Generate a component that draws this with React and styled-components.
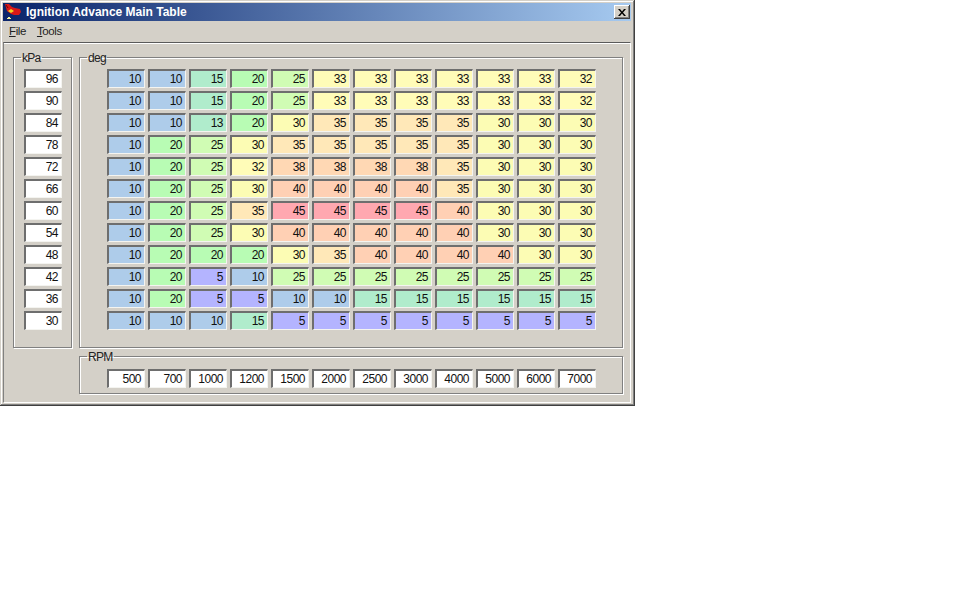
import React from "react";
import styled, { createGlobalStyle } from "styled-components";

const GlobalStyle = createGlobalStyle`
    html, body {
        margin: 0;
        padding: 0;
        background-color: #fff;
    }
    body {
        font-family: "Liberation Sans", Arial, sans-serif;
        font-size: 12px;
        color: #000;
    }
`;

const Window = styled.div`
    box-sizing: border-box;
    display: flex;
    flex-direction: column;
    width: 635px;
    height: 406px;
    padding: 3px 4px 3px 3px;
    background-color: #d4d0c8;
    box-shadow: inset -1px -1px 0 #404040, inset 1px 1px 0 #d4d0c8,
        inset -2px -2px 0 #808080, inset 2px 2px 0 #fff;
`;

const TitleBar = styled.div`
    display: flex;
    align-items: center;
    flex: 0 0 18px;
    padding: 0 1px 0 2px;
    background: linear-gradient(to right, #0a246a, #a6caf0);
`;

const TitleText = styled.span`
    flex: 1;
    margin-left: 5px;
    color: #fff;
    font-family: "Liberation Sans", Arial, sans-serif;
    font-size: 12px;
    font-weight: 700;
    line-height: 18px;
    white-space: nowrap;
`;

const CloseButton = styled.div`
    display: flex;
    align-items: center;
    justify-content: center;
    width: 16px;
    height: 14px;
    background-color: #d4d0c8;
    box-shadow: inset -1px -1px 0 #404040, inset 1px 1px 0 #fff, inset -2px -2px 0 #808080;
`;

const MenuBar = styled.div`
    display: flex;
    flex: 0 0 19px;
    align-items: center;
    gap: 11px;
    padding: 0 0 1px 6px;
`;

const MenuItem = styled.span`
    color: #222;
    font-size: 11.5px;
    letter-spacing: -0.4px;
    line-height: 18px;

    u {
        text-decoration: underline;
        text-underline-offset: 1px;
    }
`;

const ClientArea = styled.div`
    box-sizing: border-box;
    display: flex;
    flex: 1;
    gap: 7px;
    padding: 7px 7px 0 9px;
    margin-top: 1px;
    border-top: 1px solid #5a5a5a;
    border-left: 1px solid #808080;
    border-right: 1px solid #fff;
    border-bottom: 1px solid #fff;
    box-shadow: inset 0 1px 0 #fff;
`;

const Group = styled.fieldset`
    box-sizing: border-box;
    margin: 0;
    min-width: 0;
    width: ${props => props.$W}px;
    height: ${props => props.$H}px;
    padding: ${props => props.$TOP}px 0 0 ${props => props.$INSET}px;
    border: 1px solid #808080;
    box-shadow: 1px 1px 0 #fff, inset 1px 1px 0 #fff;
`;

const Legend = styled.legend`
    margin-left: ${props => 7 - props.$INSET}px;
    padding: 1px 1px 0;
    color: #222;
    font-size: 12px;
    letter-spacing: -0.7px;
    line-height: 14px;
`;

const RightColumn = styled.div`
    display: flex;
    flex-direction: column;
    gap: 1px;
`;

const CellGrid = styled.div`
    display: grid;
    grid-template-columns: repeat(${props => props.$COLS}, 38px);
    grid-auto-rows: 19px;
    column-gap: 3px;
    row-gap: 3px;
`;

const Cell = styled.div`
    box-sizing: border-box;
    padding-right: 3px;
    text-align: right;
    color: #111;
    font-size: 12px;
    letter-spacing: -0.5px;
    line-height: 16px;
    background-color: ${props => props.$BG || "#fff"};
    border-style: solid;
    border-width: 2px 1px 1px 2px;
    border-color: #6e6e6e #f4f4f0 #f4f4f0 #6e6e6e;
`;

const heat = {
    5: "#b4b4ff",
    10: "#aeccea",
    13: "#b0eccc",
    15: "#b0eccc",
    20: "#b8fcb4",
    25: "#d0fcb4",
    30: "#fcfcb4",
    32: "#fffcb8",
    33: "#fffcb8",
    35: "#ffe8b8",
    38: "#ffd8b4",
    40: "#ffd0b4",
    45: "#ffa8b0",
};

const kpa = [96, 90, 84, 78, 72, 66, 60, 54, 48, 42, 36, 30];
const rpm = [500, 700, 1000, 1200, 1500, 2000, 2500, 3000, 4000, 5000, 6000, 7000];

const table = [
    [10, 10, 15, 20, 25, 33, 33, 33, 33, 33, 33, 32],
    [10, 10, 15, 20, 25, 33, 33, 33, 33, 33, 33, 32],
    [10, 10, 13, 20, 30, 35, 35, 35, 35, 30, 30, 30],
    [10, 20, 25, 30, 35, 35, 35, 35, 35, 30, 30, 30],
    [10, 20, 25, 32, 38, 38, 38, 38, 35, 30, 30, 30],
    [10, 20, 25, 30, 40, 40, 40, 40, 35, 30, 30, 30],
    [10, 20, 25, 35, 45, 45, 45, 45, 40, 30, 30, 30],
    [10, 20, 25, 30, 40, 40, 40, 40, 40, 30, 30, 30],
    [10, 20, 20, 20, 30, 35, 40, 40, 40, 40, 30, 30],
    [10, 20, 5, 10, 25, 25, 25, 25, 25, 25, 25, 25],
    [10, 20, 5, 5, 10, 10, 15, 15, 15, 15, 15, 15],
    [10, 10, 10, 15, 5, 5, 5, 5, 5, 5, 5, 5],
];

const AppIcon = () => (
    <svg width="16" height="16" viewBox="0 0 16 16">
        <path d="M0 0 L4 0 L7 3 L10 4 L15 5 L16 8 L14 11 L9 11 L6 10 L2 7 Z" fill="#d81818" />
        <path d="M3 7 L6 5 L9 7 L6 9 Z" fill="#f0d020" />
        <path d="M1 1 L3 4" stroke="#700808" fill="none" />
        <path d="M2 15 L4 13 L6 15 M3 14.5 H5" stroke="#f0f0a0" fill="none" />
    </svg>
);

const CloseIcon = () => (
    <svg width="8" height="7" viewBox="0 0 8 7">
        <path d="M0 0 H2 L4 2.5 L6 0 H8 L5 3.5 L8 7 H6 L4 4.5 L2 7 H0 L3 3.5 Z" fill="#000" />
    </svg>
);

export default function App() {
    return (
        <>
            <GlobalStyle />
            <Window>
                <TitleBar>
                    <AppIcon />
                    <TitleText>Ignition Advance Main Table</TitleText>
                    <CloseButton>
                        <CloseIcon />
                    </CloseButton>
                </TitleBar>
                <MenuBar>
                    <MenuItem><u>F</u>ile</MenuItem>
                    <MenuItem><u>T</u>ools</MenuItem>
                </MenuBar>
                <ClientArea>
                    <Group $W={59} $H={298} $TOP={4} $INSET={10}>
                        <Legend $INSET={10}>kPa</Legend>
                        <CellGrid $COLS={1}>
                            {kpa.map(v => <Cell key={v}>{v}</Cell>)}
                        </CellGrid>
                    </Group>
                    <RightColumn>
                        <Group $W={544} $H={298} $TOP={4} $INSET={27}>
                            <Legend $INSET={27}>deg</Legend>
                            <CellGrid $COLS={12}>
                                {table.flat().map((v, i) => <Cell key={i} $BG={heat[v]}>{v}</Cell>)}
                            </CellGrid>
                        </Group>
                        <Group $W={544} $H={45} $TOP={5} $INSET={27}>
                            <Legend $INSET={27}>RPM</Legend>
                            <CellGrid $COLS={12}>
                                {rpm.map(v => <Cell key={v}>{v}</Cell>)}
                            </CellGrid>
                        </Group>
                    </RightColumn>
                </ClientArea>
            </Window>
        </>
    );
}
